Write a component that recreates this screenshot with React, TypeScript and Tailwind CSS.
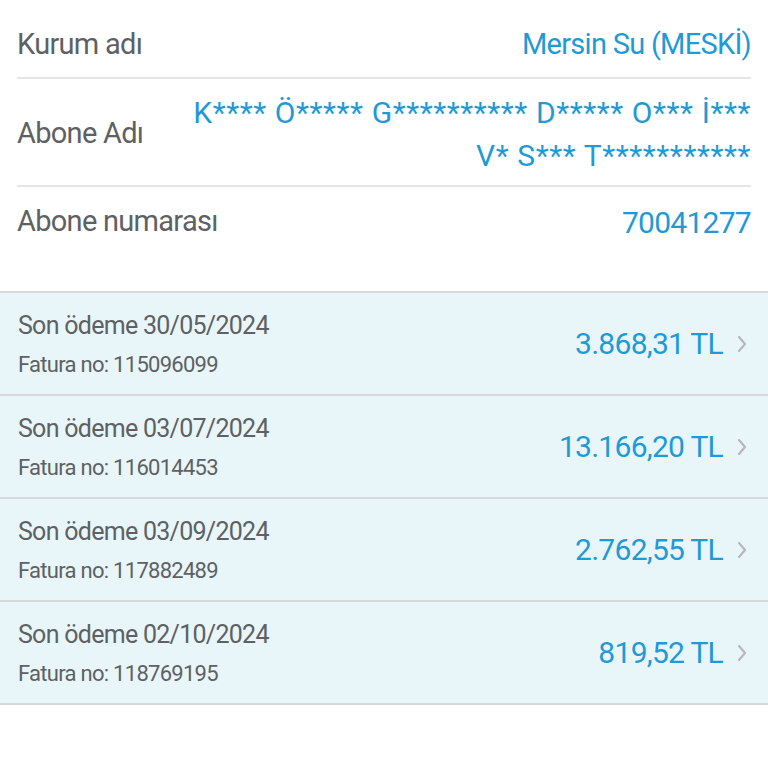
const bills = [
  { date: "30/05/2024", no: "115096099", amount: "3.868,31 TL" },
  { date: "03/07/2024", no: "116014453", amount: "13.166,20 TL" },
  { date: "03/09/2024", no: "117882489", amount: "2.762,55 TL" },
  { date: "02/10/2024", no: "118769195", amount: "819,52 TL" },
];

function Chevron() {
  return (
    <svg width="12" height="20" viewBox="0 0 12 20" fill="none" className="shrink-0">
      <path d="M3 3l6 7-6 7" stroke="#b5b9bd" strokeWidth="2.2" strokeLinecap="round" strokeLinejoin="round" />
    </svg>
  );
}

export default function App() {
  return (
    <div className="min-h-[768px] w-[768px] bg-white font-['Roboto',sans-serif] tracking-[-0.045em]">
      <div className="px-[17px]">
        <div className="flex h-[79px] items-center justify-between border-b-2 border-[#e4e5e6] pt-[12px]">
          <span className="text-[29px] text-[#5e6163]">Kurum adı</span>
          <span className="text-[29px] text-[#1f9ad6]">Mersin Su (MESKİ)</span>
        </div>
        <div className="flex h-[108px] items-center justify-between border-b-2 border-[#e4e5e6] pt-[4px]">
          <span className="text-[29px] text-[#5e6163]">Abone Adı</span>
          <span className="text-right text-[30px] leading-[43px] tracking-[0.02em] text-[#1f9ad6]">
            K**** Ö***** G********** D***** O*** İ***
            <br />
            V* S*** T***********
          </span>
        </div>
        <div className="flex h-[70px] items-center justify-between">
          <span className="text-[29px] text-[#5e6163]">Abone numarası</span>
          <span className="text-[30px] text-[#1f9ad6]">70041277</span>
        </div>
      </div>
      <div className="mt-[34px] border-t-2 border-[#d6d8da] bg-[#e9f6f9]">
        {bills.map((b) => (
          <div key={b.no} className="flex h-[103px] items-center justify-between border-b-2 border-[#d6d8da] pl-[18px] pr-[20px]">
            <div className="flex flex-col pt-[2px]">
              <span className="text-[25px] leading-[34px] text-[#5e6163]">Son ödeme {b.date}</span>
              <span className="mt-[6px] text-[22px] leading-[32px] text-[#5e6163]">Fatura no: {b.no}</span>
            </div>
            <div className="flex items-center gap-[13px]">
              <span className="text-[30px] text-[#1f9ad6]">{b.amount}</span>
              <Chevron />
            </div>
          </div>
        ))}
      </div>
    </div>
  );
}
